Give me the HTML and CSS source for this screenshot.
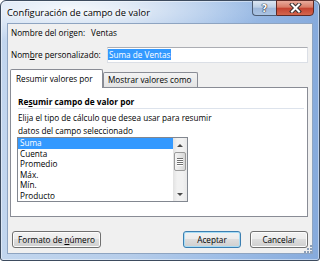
FILE: index.html
```html
<!DOCTYPE html>
<html>
<head>
    <meta charset="UTF-8">
    <title>Configuración de campo de valor</title>
    <link rel="stylesheet" href="styles.css">
</head>
<body>
    <div class="window">
        <div class="titlebar">
            <span class="title">Configuración de campo de valor</span>
            <div class="caption-buttons">
                <span class="cap-btn help-btn">?</span>
                <span class="cap-btn close-btn">
                    <svg width="13" height="10" viewBox="0 0 13 10">
                        <path d="M3 1.5 L10 8.5 M10 1.5 L3 8.5" stroke="#3a3030" stroke-width="4" stroke-linecap="square" fill="none"/>
                        <path d="M3 1.5 L10 8.5 M10 1.5 L3 8.5" stroke="#fff" stroke-width="2" stroke-linecap="square" fill="none"/>
                    </svg>
                </span>
            </div>
        </div>

        <div class="client">
            <div class="field-row source-row">
                <span class="label">Nombre del origen:</span>
                <span class="value">Ventas</span>
            </div>
            <div class="field-row name-row">
                <label class="label">Nom<u>b</u>re personalizado:</label>
                <div class="textbox"><span class="selected-text">Suma de Ventas</span></div>
            </div>

            <!-- pestañas -->
            <div class="tabs">
                <div class="tab active">Resumir valores por</div>
                <div class="tab">Mostrar valores como</div>
            </div>
            <div class="tab-panel">
                <div class="group-title">Re<u>s</u>umir campo de valor por</div>
                <p class="desc">Elija el tipo de cálculo que desea usar para resumir<br>datos del campo seleccionado</p>
                <div class="listbox">
                    <ul class="items">
                        <li class="selected">Suma</li>
                        <li>Cuenta</li>
                        <li>Promedio</li>
                        <li>Máx.</li>
                        <li>Mín.</li>
                        <li>Producto</li>
                    </ul>
                    <div class="scrollbar">
                        <div class="sb-arrow"><span class="tri-up"></span></div>
                        <div class="sb-thumb">
                            <span class="grip"></span>
                            <span class="grip"></span>
                            <span class="grip"></span>
                            <span class="grip"></span>
                        </div>
                        <div class="sb-track"></div>
                        <div class="sb-arrow"><span class="tri-down"></span></div>
                    </div>
                </div>
            </div>

            <div class="button-row">
                <button class="btn format-btn">Formato de <u>n</u>úmero</button>
                <button class="btn default-btn">Aceptar</button>
                <button class="btn">Cancelar</button>
            </div>

            <svg class="size-grip" width="8" height="8" viewBox="0 0 8 8">
                <rect x="6" y="0" width="2" height="2" fill="#8c9fb8"/>
                <rect x="3" y="3" width="2" height="2" fill="#8c9fb8"/>
                <rect x="6" y="3" width="2" height="2" fill="#8c9fb8"/>
                <rect x="0" y="6" width="2" height="2" fill="#8c9fb8"/>
                <rect x="3" y="6" width="2" height="2" fill="#8c9fb8"/>
                <rect x="6" y="6" width="2" height="2" fill="#8c9fb8"/>
            </svg>
        </div>
    </div>
</body>
</html>
```

FILE: styles.css
```css
* {
    box-sizing: border-box;
}
html, body {
    margin: 0;
    padding: 0;
}
body {
    width: 320px;
    height: 261px;
    overflow: hidden;
    background: #fff;
    font-family: "Open Sans", "Liberation Sans", sans-serif;
    font-size: 8.2px;
    color: #000;
}
.window {
    width: 320px;
    height: 261px;
    border: 1px solid #3d4b5e;
    border-radius: 6px 6px 3px 3px;
    background:
        radial-gradient(ellipse 200px 34px at 70px 8px, rgba(255, 255, 255, 0.85), rgba(255, 255, 255, 0) 100%),
        linear-gradient(to right, #c2d6ee 0%, #b6cdea 40%, #9dbde6 70%, #86aadc 100%);
    box-shadow: inset 0 0 0 1px rgba(255, 255, 255, 0.45);
    padding: 0 6px 6px 6px;
    display: flex;
    flex-direction: column;
}
.titlebar {
    height: 22px;
    display: flex;
    flex-shrink: 0;
}
.title {
    padding-top: 5px;
    font-size: 9.3px;
    line-height: 13px;
    text-shadow: 0 0 5px #fff, 0 0 5px #fff;
}
.caption-buttons {
    margin-left: auto;
    margin-right: -1px;
    margin-top: -1px;
    display: flex;
    height: 16px;
}
.cap-btn {
    height: 16px;
    display: flex;
    align-items: center;
    justify-content: center;
    border: 1px solid #4d5d74;
}
.help-btn {
    width: 24px;
    border-right: none;
    border-radius: 0 0 0 4px;
    background: linear-gradient(#dce6f2 0%, #bccfe6 45%, #9fb8da 50%, #aac3e3 100%);
    color: #fff;
    font-family: "DejaVu Sans", sans-serif;
    font-weight: bold;
    font-size: 10px;
    text-shadow: 0 0 1px #223, 0 0 1px #223, 0 0 1px #223;
}
.close-btn {
    width: 38px;
    border-color: #5e2a26;
    border-radius: 0 0 4px 0;
    background: linear-gradient(#e9ab9c 0%, #d87a66 45%, #c4412f 50%, #d3664d 100%);
}
.client {
    flex: 1;
    position: relative;
    background: #f0f0f0;
    border: 1px solid #8ea4c1;
    padding: 3px 4px 0 2px;
}
.field-row {
    display: flex;
    padding-left: 1px;
}
.source-row {
    height: 12px;
    line-height: 12px;
}
.source-row .label {
    width: 80px;
}
.name-row {
    margin-top: 8px;
    height: 16px;
    line-height: 15px;
}
.name-row .label {
    width: 96px;
}
.textbox {
    width: 201px;
    height: 16px;
    margin-right: -1px;
    background: #fff;
    border: 1px solid #dbdfe6;
    border-top-color: #abadb3;
    padding: 1px 0 0 0;
    line-height: 11px;
}
.selected-text {
    display: inline-block;
    background: #3399ff;
    color: #fff;
    padding: 0 1px;
    height: 11px;
}
.tabs {
    display: flex;
    align-items: flex-end;
    height: 19px;
    margin-top: 6px;
    margin-bottom: -1px;
    position: relative;
    z-index: 1;
}
.tab {
    border: 1px solid #898c95;
    border-bottom: none;
    border-radius: 2px 2px 0 0;
    padding-left: 5px;
}
.tab.active {
    width: 93px;
    height: 19px;
    background: #fff;
    line-height: 17px;
}
.tab:not(.active) {
    width: 95px;
    height: 15px;
    margin-bottom: 1px;
    background: linear-gradient(#f3f3f3, #e3e3e3);
    line-height: 14px;
    padding-left: 4px;
}
.tab-panel {
    height: 130px;
    background: #fff;
    border: 1px solid #898c95;
    padding: 7px 3px 0 7px;
}
.group-title {
    font-weight: bold;
    font-size: 8.3px;
    line-height: 13px;
    border-bottom: 1px solid #dde3ec;
}
.desc {
    margin: 2px 0 0 0;
    line-height: 13px;
}
.listbox {
    width: 171px;
    height: 65px;
    margin-left: -1px;
    border: 1px solid #828790;
    display: flex;
}
.items {
    list-style: none;
    margin: 0;
    padding: 0;
    flex: 1;
}
.items li {
    height: 10.5px;
    line-height: 10.5px;
    padding-left: 2px;
}
.items li.selected {
    background: #3399ff;
    color: #fff;
}
.scrollbar {
    width: 14px;
    display: flex;
    flex-direction: column;
    background: linear-gradient(to right, #e2e2e2, #f1f1f1 30%, #f1f1f1 70%, #e8e8e8);
}
.sb-arrow {
    height: 14px;
    display: flex;
    align-items: center;
    justify-content: center;
}
.tri-up {
    width: 0;
    height: 0;
    border-left: 3px solid transparent;
    border-right: 3px solid transparent;
    border-bottom: 3px solid #4a4a4a;
}
.tri-down {
    width: 0;
    height: 0;
    border-left: 3px solid transparent;
    border-right: 3px solid transparent;
    border-top: 3px solid #4a4a4a;
}
.sb-thumb {
    height: 19px;
    margin: 0 1px;
    border: 1px solid #9a9a9a;
    border-radius: 2px;
    background: linear-gradient(to right, #f4f4f4, #e6e6e6 50%, #d6d6d6);
    display: flex;
    flex-direction: column;
    align-items: center;
    justify-content: center;
    gap: 1px;
}
.grip {
    width: 6px;
    height: 1px;
    background: #6f6f6f;
    box-shadow: 0 1px 0 #fff;
}
.sb-track {
    flex: 1;
}
.button-row {
    display: flex;
    margin-top: 14px;
}
.btn {
    height: 17px;
    width: 58px;
    padding: 0;
    font-family: "Open Sans", "Liberation Sans", sans-serif;
    font-size: 8.2px;
    line-height: 14px;
    color: #000;
    border: 1px solid #707070;
    border-radius: 3px;
    background: linear-gradient(#f2f2f2 0%, #ebebeb 50%, #dddddd 50%, #cfcfcf 100%);
    box-shadow: inset 0 0 0 1px #fcfcfc;
}
.format-btn {
    width: 89px;
    margin-left: 2px;
    margin-right: auto;
}
.default-btn {
    margin-right: 9px;
    border-color: #3c7fb1;
    box-shadow: inset 0 0 0 1px #a7dcf5;
}
.size-grip {
    position: absolute;
    right: 0;
    bottom: 0;
}
```
